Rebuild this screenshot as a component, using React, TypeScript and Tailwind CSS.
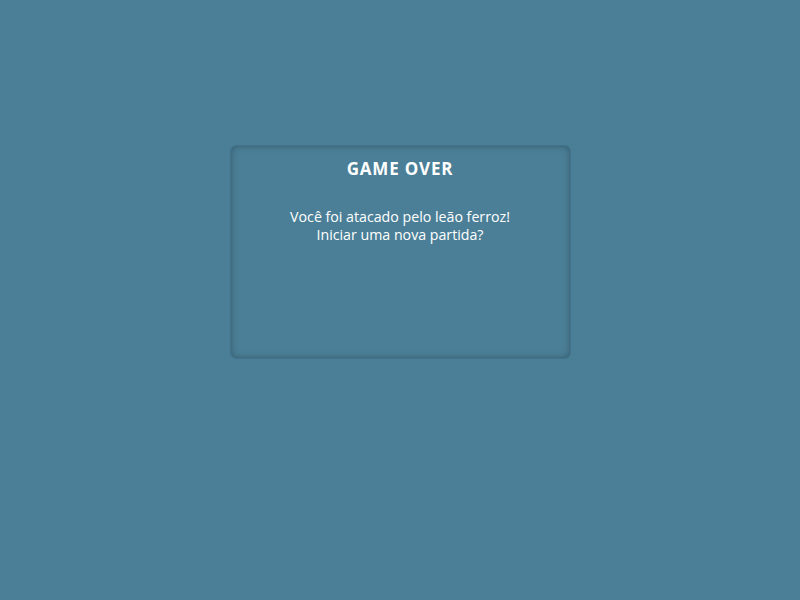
import React from 'react';

const App: React.FC = () => {
  return (
    <div className="min-h-screen w-full bg-[#4b7f97] flex justify-center pt-[145px]" style={{ fontFamily: '"Open Sans", "Noto Sans", sans-serif' }}>
      <div className="w-[341px] h-[214px] rounded-[6px] border border-[#41728a] shadow-[inset_0_0_7px_rgba(0,0,0,0.3)] flex flex-col items-center text-white">
        <h1 className="mt-[12px] text-[17px] font-bold leading-[22px] tracking-[0.8px]">GAME OVER</h1>
        <p className="mt-[28px] text-[14.2px] leading-[18px] text-center">
          Você foi atacado pelo leão ferroz!
          <br />
          Iniciar uma nova partida?
        </p>
      </div>
    </div>
  );
};

export default App;
